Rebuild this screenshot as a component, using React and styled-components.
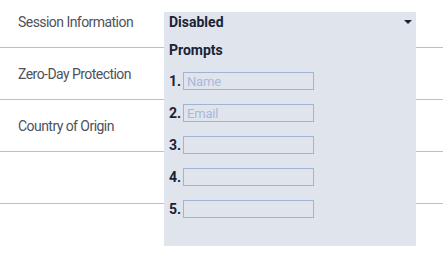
import React from 'react'
import styled, { createGlobalStyle } from 'styled-components'

const GlobalStyle = createGlobalStyle`
  body {
    margin: 0;
    background: #fff;
    font-family: Roboto, "Liberation Sans", sans-serif;
  }
`

const Page = styled.div`
  position: relative;
  width: 443px;
  height: 274px;
  overflow: hidden;
`

const Table = styled.div`
  display: flex;
  flex-direction: column;
  margin-top: -4px;
`

const Row = styled.div`
  display: flex;
  align-items: center;
  height: 52px;
  box-sizing: border-box;
  padding: 0 18px;
  border-bottom: 1px solid #b3c0dd;
`

const Label = styled.span`
  font-size: 14px;
  letter-spacing: -0.55px;
  color: #4d525c;
`

const Dropdown = styled.div`
  position: absolute;
  left: 164px;
  top: 12px;
  width: 252px;
  height: 234px;
  box-sizing: border-box;
  padding: 0 4px 0 5px;
  background: #e0e5ed;
  display: flex;
  flex-direction: column;
  color: #1b2235;
`

const Select = styled.div`
  display: flex;
  align-items: center;
  justify-content: space-between;
  height: 20px;
  font-size: 14px;
  font-weight: 700;
`

const Caret = styled.span`
  width: 0;
  height: 0;
  border-left: 4px solid transparent;
  border-right: 4px solid transparent;
  border-top: 4px solid #1b2235;
`

const Heading = styled.div`
  margin-top: 8px;
  height: 20px;
  line-height: 20px;
  font-size: 14px;
  font-weight: 700;
`

const Prompts = styled.ol`
  list-style: none;
  margin: 12px 0 0;
  padding: 0;
  display: flex;
  flex-direction: column;
  gap: 14px;
`

const Prompt = styled.li`
  display: flex;
  align-items: center;
  height: 18px;
`

const Num = styled.span`
  width: 14px;
  font-size: 14px;
  font-weight: 700;
`

const Input = styled.input`
  width: 131px;
  height: 18px;
  box-sizing: border-box;
  margin: 0;
  padding: 0 3px;
  border: 1px solid #a3b3d4;
  background: transparent;
  font-family: Roboto, "Liberation Sans", sans-serif;
  font-size: 13px;
  letter-spacing: -0.2px;
  color: #1b2235;
  &::placeholder {
    color: #a9b8d8;
  }
`

const labels = ['Session Information', 'Zero-Day Protection', 'Country of Origin', '']
const placeholders = ['Name', 'Email', '', '', '']

const App = () => {
  return (
    <Page>
      <GlobalStyle />
      <Table>
        {labels.map((l, i) => (
          <Row key={i}>
            <Label>{l}</Label>
          </Row>
        ))}
      </Table>
      <Dropdown>
        <Select>
          Disabled
          <Caret />
        </Select>
        <Heading>Prompts</Heading>
        <Prompts>
          {placeholders.map((p, i) => (
            <Prompt key={i}>
              <Num>{i + 1}.</Num>
              <Input placeholder={p} />
            </Prompt>
          ))}
        </Prompts>
      </Dropdown>
    </Page>
  )
}

export default App
